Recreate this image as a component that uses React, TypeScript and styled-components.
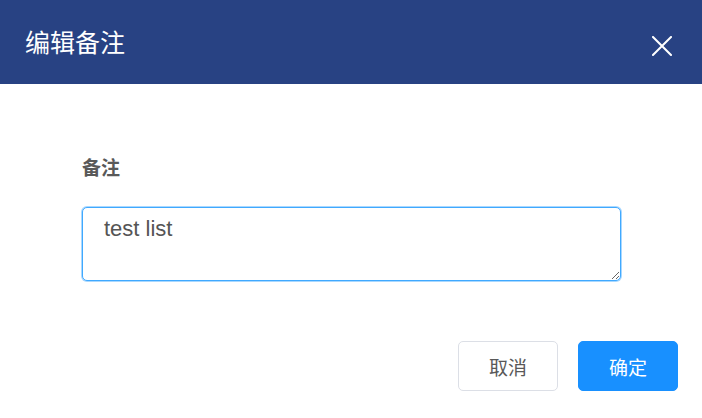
import React from "react";
import styled, { createGlobalStyle } from "styled-components";

const Global = createGlobalStyle`
  html, body { margin: 0; padding: 0; background: #ffffff; }
  body { font-family: "Noto Sans CJK SC", "Liberation Sans", sans-serif; }
  * { box-sizing: border-box; }
`;

const Dialog = styled.div`
  width: 702px;
  height: 418px;
  background: #ffffff;
  display: flex;
  flex-direction: column;
  overflow: hidden;
`;

const Header = styled.div`
  height: 84px;
  background: #284283;
  display: flex;
  align-items: center;
  justify-content: space-between;
  padding: 0 30px 0 25px;
`;

const Title = styled.h2`
  margin: 0 0 2px 0;
  font-size: 25px;
  line-height: 30px;
  font-weight: 400;
  color: #ffffff;
  font-family: "Noto Sans CJK SC", sans-serif;
`;

const CloseButton = styled.button`
  border: none;
  background: transparent;
  padding: 0;
  margin-top: 8px;
  width: 20px;
  height: 20px;
  display: flex;
  cursor: pointer;
`;

const Body = styled.div`
  padding: 73px 81px 0 82px;
  display: flex;
  flex-direction: column;
  gap: 30px;
`;

const Label = styled.label`
  font-size: 19px;
  line-height: 20px;
  font-weight: 700;
  color: #595959;
  font-family: "Noto Sans CJK SC", sans-serif;
`;

const TextArea = styled.textarea`
  width: 539px;
  height: 74px;
  margin: 0;
  padding: 6px 21px;
  border: 1px solid #40a9ff;
  border-radius: 5px;
  box-shadow: 0 0 0 1px rgba(64, 169, 255, 0.45);
  outline: none;
  font-family: "Liberation Sans", "Noto Sans CJK SC", sans-serif;
  font-size: 22px;
  line-height: 30px;
  color: #555555;
  resize: vertical;
  display: block;
`;

const Footer = styled.div`
  margin-top: 60px;
  padding: 0 24px;
  display: flex;
  justify-content: flex-end;
  gap: 20px;
`;

const Button = styled.button<{ $primary?: boolean }>`
  width: 100px;
  height: 50px;
  border-radius: 5px;
  font-family: "Noto Sans CJK SC", sans-serif;
  font-size: 19px;
  line-height: 1;
  cursor: pointer;
  border: 1px solid ${(p) => (p.$primary ? "#1890ff" : "#dcdfe6")};
  background: ${(p) => (p.$primary ? "#1890ff" : "#ffffff")};
  color: ${(p) => (p.$primary ? "#ffffff" : "#595959")};
`;

export default function App() {
  return (
    <>
      <Global />
      <Dialog>
        <Header>
          <Title>编辑备注</Title>
          <CloseButton aria-label="close">
            <svg width="20" height="20" viewBox="0 0 20 20">
              <path d="M1 1 L19 19 M19 1 L1 19" stroke="#ffffff" strokeWidth="2" strokeLinecap="square" fill="none" />
            </svg>
          </CloseButton>
        </Header>
        <Body>
          <Label>备注</Label>
          <TextArea defaultValue="test list" />
        </Body>
        <Footer>
          <Button>取消</Button>
          <Button $primary>确定</Button>
        </Footer>
      </Dialog>
    </>
  );
}
